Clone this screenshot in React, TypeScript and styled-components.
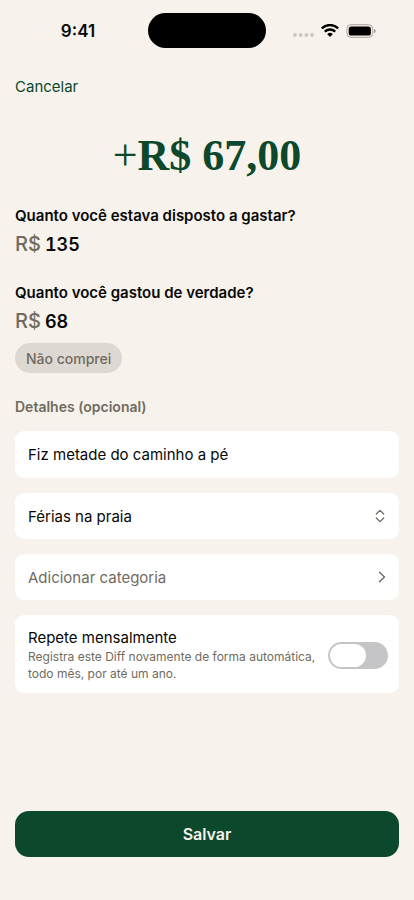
import React, { useState } from "react";
import styled, { createGlobalStyle } from "styled-components";

const green = "#0b482c";
const muted = "#706b60";

const GlobalStyle = createGlobalStyle`
  *, *::before, *::after { box-sizing: border-box; }
  body {
    margin: 0;
    background: #f7f2eb;
    color: #080808;
    font-family: Inter, "Liberation Sans", sans-serif;
  }
  button, input, select { font: inherit; color: inherit; }
`;

const Screen = styled.div`
  display: flex;
  flex-direction: column;
  min-height: 100vh;
`;

const StatusBar = styled.header`
  display: grid;
  grid-template-columns: 1fr 118px 1fr;
  align-items: center;
  padding: 13px 15px 0;
`;

const Clock = styled.time`
  justify-self: center;
  padding-right: 7px;
  font-size: 17px;
  line-height: 20px;
  font-weight: 600;
`;

const Island = styled.div`
  height: 35px;
  border-radius: 18px;
  background: #000;
`;

const StatusIcons = styled.div`
  display: flex;
  align-items: center;
  justify-self: center;
  gap: 7px;
  padding-left: 4px;
`;

const Form = styled.form`
  display: flex;
  flex: 1;
  flex-direction: column;
  padding: 27px 15px 43px;
`;

const CancelButton = styled.button`
  align-self: flex-start;
  padding: 0;
  border: 0;
  background: none;
  color: ${green};
  font-size: 15px;
  line-height: 24px;
`;

const Difference = styled.h1`
  margin: 29px 0 20px;
  color: ${green};
  font-family: "Liberation Serif", serif;
  font-size: 44px;
  line-height: 56px;
  font-weight: 700;
  text-align: center;
`;

const Sign = styled.span`
  font-weight: 400;
`;

const AmountGroup = styled.div`
  display: flex;
  flex-direction: column;
  margin-bottom: 23px;
`;

const Question = styled.label`
  font-size: 15px;
  line-height: 24px;
  font-weight: 600;
`;

const AmountRow = styled.div`
  display: flex;
  align-items: baseline;
  gap: 4px;
  height: 28px;
  margin-top: 2px;
  line-height: 28px;
`;

const Currency = styled.span`
  color: ${muted};
  font-size: 20px;
  font-weight: 500;
`;

const AmountInput = styled.input`
  flex: 1;
  min-width: 0;
  height: 28px;
  padding: 0;
  border: 0;
  outline: 0;
  background: none;
  font-size: 18px;
  font-weight: 600;
  font-variant-numeric: tabular-nums;
`;

const Chip = styled.button`
  align-self: flex-start;
  height: 30px;
  margin-top: 8px;
  padding: 0 11px;
  border: 0;
  border-radius: 15px;
  background: #ddd8d1;
  color: ${muted};
  font-size: 14px;
  font-weight: 500;
`;

const SectionTitle = styled.h2`
  margin: 1px 0 14px;
  color: ${muted};
  font-size: 14px;
  line-height: 20px;
  font-weight: 600;
`;

const Fields = styled.div`
  display: flex;
  flex-direction: column;
  gap: 15px;
`;

const TextField = styled.input`
  width: 100%;
  height: 47px;
  padding: 0 13px;
  border: 0;
  border-radius: 9px;
  outline: 0;
  background: #fff;
  font-size: 15px;
`;

const SelectField = styled.label`
  display: flex;
  align-items: center;
  height: 46px;
  padding: 0 13px;
  border-radius: 9px;
  background: #fff;
`;

const Select = styled.select`
  flex: 1;
  min-width: 0;
  height: 46px;
  padding: 0;
  border: 0;
  outline: 0;
  appearance: none;
  background: none;
  font-size: 15px;
`;

const CategoryButton = styled.button`
  display: flex;
  align-items: center;
  justify-content: space-between;
  height: 46px;
  padding: 0 13px;
  border: 0;
  border-radius: 9px;
  background: #fff;
  color: ${muted};
  font-size: 15px;
`;

const RepeatCard = styled.label`
  display: flex;
  align-items: center;
  justify-content: space-between;
  gap: 8px;
  padding: 13px 11px 11px 13px;
  border-radius: 9px;
  background: #fff;
`;

const RepeatText = styled.span`
  display: flex;
  flex-direction: column;
`;

const RepeatTitle = styled.span`
  font-size: 15px;
  line-height: 20px;
`;

const RepeatHint = styled.span`
  color: ${muted};
  font-size: 12px;
  line-height: 17px;
`;

const Switch = styled.input`
  display: flex;
  flex: none;
  align-items: center;
  width: 60px;
  height: 27px;
  margin: 0;
  padding: 2px;
  border-radius: 14px;
  appearance: none;
  background: #c5c5c7;

  &::before {
    content: "";
    width: 36px;
    height: 23px;
    border-radius: 12px;
    background: #fff;
  }

  &:checked {
    justify-content: flex-end;
    background: ${green};
  }
`;

const SaveButton = styled.button`
  height: 46px;
  margin-top: auto;
  border: 0;
  border-radius: 14px;
  background: ${green};
  color: #f7f2eb;
  font-size: 16px;
  font-weight: 600;
`;

const SignalIcon = () => (
  <svg width="21" height="12" viewBox="0 0 21 12" fill="#cbc7c1" aria-hidden="true">
    <circle cx="2" cy="10" r="1.9" />
    <circle cx="7.7" cy="10" r="1.9" />
    <circle cx="13.4" cy="10" r="1.9" />
    <circle cx="19" cy="10" r="1.9" />
  </svg>
);

const WifiIcon = () => (
  <svg width="18" height="13" viewBox="0 0 18 13" fill="none" stroke="#000" strokeWidth="2.4" aria-hidden="true">
    <path d="M.8 4.4a11.7 11.7 0 0 1 16.4 0" />
    <path d="M3.8 7.6a7.4 7.4 0 0 1 10.4 0" />
    <path d="M9 13 6.2 10.2a4 4 0 0 1 5.6 0z" fill="#000" stroke="none" />
  </svg>
);

const BatteryIcon = () => (
  <svg width="30" height="14" viewBox="0 0 30 14" aria-hidden="true">
    <rect x=".9" y=".7" width="25.800" height="12.6" rx="4" fill="none" stroke="#a5a19c" />
    <rect x="2.700" y="2.4" width="22.200" height="9.2" rx="2.6" fill="#000" />
    <path d="M28 4.9c2.2.5 2.2 3.7 0 4.2z" fill="#99958f" />
  </svg>
);

const UpDownIcon = () => (
  <svg width="12" height="14" viewBox="0 0 12 14" fill="none" stroke={muted} strokeWidth="1.3" strokeLinecap="round" strokeLinejoin="round" aria-hidden="true">
    <path d="m2.3 5 3.7-3.6L9.7 5M2.3 9 6 12.6 9.7 9" />
  </svg>
);

const ChevronIcon = () => (
  <svg width="8" height="12" viewBox="0 0 8 12" fill="none" stroke={muted} strokeWidth="1.4" strokeLinecap="round" strokeLinejoin="round" aria-hidden="true">
    <path d="m1.5 1.2 5 4.8-5 4.8" />
  </svg>
);

export default function App() {
  const [planned, setPlanned] = useState("135");
  const [spent, setSpent] = useState("68");
  const [description, setDescription] = useState("Fiz metade do caminho a pé");
  const [repeats, setRepeats] = useState(false);
  const difference = Number(planned) - Number(spent);
  const amount = Math.abs(difference).toFixed(2).replace(".", ",");

  return (
    <>
      <GlobalStyle />
      <Screen>
        <StatusBar>
          <Clock>9:41</Clock>
          <Island />
          <StatusIcons>
            <SignalIcon />
            <WifiIcon />
            <BatteryIcon />
          </StatusIcons>
        </StatusBar>
        <Form onSubmit={(event) => event.preventDefault()}>
          <CancelButton type="button">Cancelar</CancelButton>
          <Difference>
            <Sign>{difference < 0 ? "−" : "+"}</Sign>R$ {amount}
          </Difference>
          <AmountGroup>
            <Question htmlFor="planned">Quanto você estava disposto a gastar?</Question>
            <AmountRow>
              <Currency>R$</Currency>
              <AmountInput id="planned" inputMode="decimal" value={planned} onChange={(e) => setPlanned(e.target.value)} />
            </AmountRow>
          </AmountGroup>
          <AmountGroup>
            <Question htmlFor="spent">Quanto você gastou de verdade?</Question>
            <AmountRow>
              <Currency>R$</Currency>
              <AmountInput id="spent" inputMode="decimal" value={spent} onChange={(e) => setSpent(e.target.value)} />
            </AmountRow>
            <Chip type="button" onClick={() => setSpent("0")}>Não comprei</Chip>
          </AmountGroup>
          <SectionTitle>Detalhes (opcional)</SectionTitle>
          <Fields>
            <TextField aria-label="Descrição" value={description} onChange={(e) => setDescription(e.target.value)} />
            <SelectField>
              <Select aria-label="Objetivo" defaultValue="praia">
                <option value="praia">Férias na praia</option>
              </Select>
              <UpDownIcon />
            </SelectField>
            <CategoryButton type="button">
              Adicionar categoria
              <ChevronIcon />
            </CategoryButton>
            <RepeatCard>
              <RepeatText>
                <RepeatTitle>Repete mensalmente</RepeatTitle>
                <RepeatHint>Registra este Diff novamente de forma automática, todo mês, por até um ano.</RepeatHint>
              </RepeatText>
              <Switch type="checkbox" role="switch" checked={repeats} onChange={(e) => setRepeats(e.target.checked)} />
            </RepeatCard>
          </Fields>
          <SaveButton type="submit">Salvar</SaveButton>
        </Form>
      </Screen>
    </>
  );
}
